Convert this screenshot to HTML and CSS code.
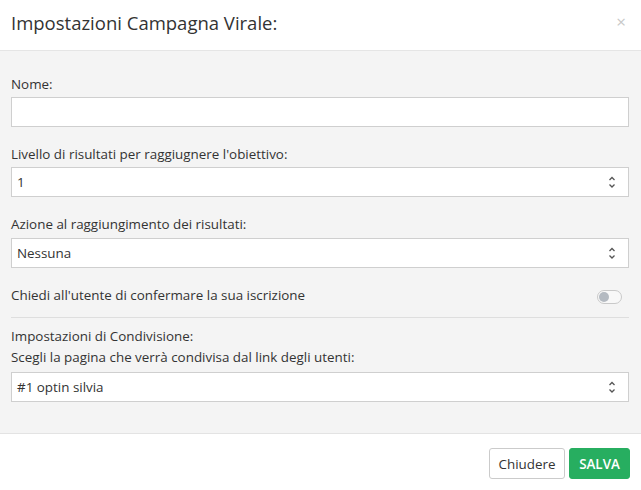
FILE: index.html
```html
<!DOCTYPE html>
<html lang="it">
<head>
<meta charset="utf-8">
<title>Impostazioni Campagna Virale</title>
<link rel="stylesheet" href="styles.css">
</head>
<body>
<div class="modal">
  <header class="modal-header">
    <h1 class="modal-title">Impostazioni Campagna Virale:</h1>
    <span class="close">×</span>
  </header>
  <main class="modal-body">
    <div class="group">
      <label class="label">Nome:</label>
      <div class="input"></div>
    </div>
    <div class="group">
      <label class="label">Livello di risultati per raggiugnere l'obiettivo:</label>
      <div class="input select"><span>1</span>
        <svg class="chev" width="8" height="14" viewBox="0 0 8 14"><path d="M1.5 5 L4 2.5 L6.5 5 M1.5 9.5 L4 12 L6.5 9.5" fill="none" stroke="#555" stroke-width="1.3"/></svg>
      </div>
    </div>
    <div class="group">
      <label class="label label-sel">Azione al raggiungimento dei risultati:</label>
      <div class="input select"><span>Nessuna</span>
        <svg class="chev" width="8" height="14" viewBox="0 0 8 14"><path d="M1.5 5 L4 2.5 L6.5 5 M1.5 9.5 L4 12 L6.5 9.5" fill="none" stroke="#555" stroke-width="1.3"/></svg>
      </div>
    </div>
    <div class="toggle-row">
      <span class="label">Chiedi all'utente di confermare la sua iscrizione</span>
      <span class="toggle"><span class="knob"></span></span>
    </div>
    <hr class="divider">
    <div class="label">Impostazioni di Condivisione:</div>
    <div class="label label-sub">Scegli la pagina che verrà condivisa dal link degli utenti:</div>
    <div class="input select"><span>#1 optin silvia</span>
      <svg class="chev" width="8" height="14" viewBox="0 0 8 14"><path d="M1.5 5 L4 2.5 L6.5 5 M1.5 9.5 L4 12 L6.5 9.5" fill="none" stroke="#555" stroke-width="1.3"/></svg>
    </div>
  </main>
  <footer class="modal-footer">
    <button class="btn btn-default">Chiudere</button>
    <button class="btn btn-success">SALVA</button>
  </footer>
</div>
</body>
</html>
```
FILE: styles.css
```css
* { box-sizing: border-box; }
html, body { margin: 0; padding: 0; }
body {
  width: 641px;
  height: 490px;
  font-family: "Open Sans", "Liberation Sans", sans-serif;
  color: #333;
  background: #fff;
}
.modal {
  display: flex;
  flex-direction: column;
  height: 490px;
}
.modal-header {
  height: 51px;
  border-bottom: 1px solid #e5e5e5;
  display: flex;
  justify-content: space-between;
  align-items: flex-start;
  padding: 11px 12px 0 11px;
  background: #fff;
}
.modal-title {
  margin: 0;
  font-size: 18.5px;
  line-height: 24px;
  font-weight: 400;
  color: #333;
}
.close {
  font-size: 17px;
  line-height: 18px;
  color: #c8c8c8;
  margin-top: 2px;
  margin-right: 3px;
}
.modal-body {
  background: #f4f4f4;
  padding: 24px 12px 31px 11px;
  border-bottom: 1px solid #e3e3e3;
  display: flex;
  flex-direction: column;
}
.group { display: flex; flex-direction: column; margin-bottom: 18px; }
.label {
  font-size: 13.4px;
  line-height: 18px;
  color: #333;
}
.group .label { margin-bottom: 4px; }
.group .label-sel { margin-bottom: 5px; }
.input {
  height: 30px;
  background: #fff;
  border: 1px solid #cfcfcf;
  font-size: 13.4px;
  line-height: 28px;
  padding: 0 5px;
  color: #333;
}
.select {
  display: flex;
  justify-content: space-between;
  align-items: center;
}
.chev { margin-right: 7px; }
.toggle-row {
  display: flex;
  justify-content: space-between;
  align-items: flex-end;
  height: 18px;
}
.toggle {
  width: 25px;
  height: 14px;
  border: 1px solid #c9c9c9;
  border-radius: 7px;
  background: #f8f8f8;
  display: flex;
  align-items: center;
  padding-left: 1px;
  margin-right: 7px;
}
.knob {
  width: 10px;
  height: 10px;
  border-radius: 50%;
  background: #b4bac1;
}
.divider {
  border: 0;
  border-top: 1px solid #dedede;
  margin: 13px 0 9px 0;
}
.label-sub { margin-top: 3px; margin-bottom: 6px; }
.modal-footer {
  flex: 1;
  background: #fff;
  display: flex;
  justify-content: flex-end;
  align-items: flex-start;
  padding: 14px 11px 0 0;
  gap: 4px;
}
.btn {
  height: 31px;
  font-family: "Open Sans", "Liberation Sans", sans-serif;
  font-size: 13.4px;
  border-radius: 3px;
  padding: 0;
  cursor: pointer;
}
.btn-default {
  background: #fff;
  border: 1px solid #cbcbcb;
  color: #333;
  width: 76px;
}
.btn-success {
  background: #27ae60;
  border: 1px solid #27ae60;
  color: #fff;
  font-weight: 600;
  width: 61px;
}
```
